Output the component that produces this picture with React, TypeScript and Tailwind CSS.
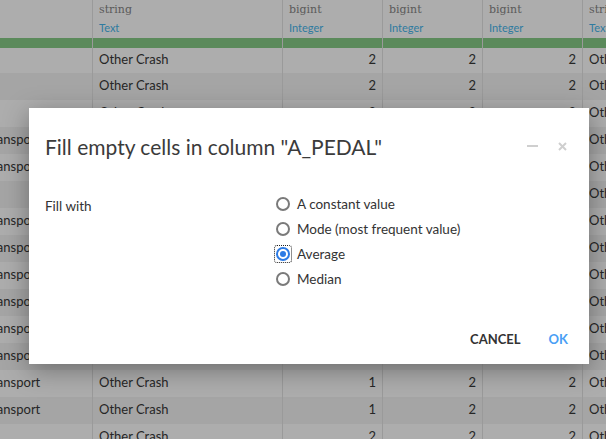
import React from 'react';

const font = { fontFamily: 'Lato, "Noto Sans", sans-serif' };

type Row = { c0: string; c1: string; n: [string, string, string] };

const rows: Row[] = [
  { c0: '', c1: 'Other Crash', n: ['2', '2', '2'] },
  { c0: '', c1: 'Other Crash', n: ['2', '2', '2'] },
  { c0: '', c1: 'Other Crash', n: ['2', '2', '2'] },
  { c0: 'Transport', c1: 'Other Crash', n: ['2', '2', '2'] },
  { c0: 'Transport', c1: 'Other Crash', n: ['2', '2', '2'] },
  { c0: '', c1: 'Other Crash', n: ['2', '2', '2'] },
  { c0: 'Transport', c1: 'Other Crash', n: ['2', '2', '2'] },
  { c0: 'Transport', c1: 'Other Crash', n: ['2', '2', '2'] },
  { c0: 'Transport', c1: 'Other Crash', n: ['2', '2', '2'] },
  { c0: 'Transport', c1: 'Other Crash', n: ['2', '2', '2'] },
  { c0: 'Transport', c1: 'Other Crash', n: ['2', '2', '2'] },
  { c0: 'Transport', c1: 'Other Crash', n: ['2', '2', '2'] },
  { c0: 'Transport', c1: 'Other Crash', n: ['1', '2', '2'] },
  { c0: 'Transport', c1: 'Other Crash', n: ['1', '2', '2'] },
  { c0: '', c1: 'Other Crash', n: ['2', '2', '2'] },
];

const cols = [
  { w: 'w-[113px]', type: '', meaning: '' },
  { w: 'w-[190px]', type: 'string', meaning: 'Text' },
  { w: 'w-[100px]', type: 'bigint', meaning: 'Integer' },
  { w: 'w-[100px]', type: 'bigint', meaning: 'Integer' },
  { w: 'w-[100px]', type: 'bigint', meaning: 'Integer' },
  { w: 'w-[60px]', type: 'string', meaning: 'Text' },
];

function Table() {
  return (
    <div className="w-[626px] h-[439px] ml-[-20px] overflow-hidden bg-[#adadad] text-[13px] text-[#262626]" style={font}>
      <div className="flex h-[38px]">
        {cols.map((c, i) => (
          <div
            key={i}
            className={`${c.w} shrink-0 border-r border-[#9a9a9a] pl-[6px] flex flex-col pt-[2px]`}
          >
            <span className="text-[11px] h-[16px] text-[#5a5a5a]" style={{ fontFamily: '"DejaVu Serif", serif' }}>
              {c.type}
            </span>
            <span className="text-[11px] mt-[2px] text-[#2f7ba0]">{c.meaning}</span>
          </div>
        ))}
      </div>
      <div className="flex h-[10px]">
        {cols.map((c, i) => (
          <div key={i} className={`${c.w} shrink-0 border-r border-[#9a9a9a] bg-[#5b8a5b]`} />
        ))}
      </div>
      {rows.map((r, i) => (
        <div
          key={i}
          className={`flex ${i === 0 ? 'h-[25px]' : 'h-[27px]'} ${i % 2 === 1 ? 'bg-[#a5a5a5]' : 'bg-[#adadad]'}`}
        >
          <div className="w-[113px] shrink-0 border-r border-[#9a9a9a] flex items-center overflow-hidden whitespace-nowrap pl-[6px] pb-[2px]">
            {r.c0}
          </div>
          <div className="w-[190px] shrink-0 border-r border-[#9a9a9a] flex items-center pl-[6px] pb-[2px]">{r.c1}</div>
          {r.n.map((v, j) => (
            <div key={j} className="w-[100px] shrink-0 border-r border-[#9a9a9a] flex items-center justify-end pr-[6px] pb-[2px]">
              {v}
            </div>
          ))}
          <div className="w-[60px] shrink-0 flex items-center pl-[6px] pb-[2px] whitespace-nowrap overflow-hidden">Other Crash</div>
        </div>
      ))}
    </div>
  );
}

const options = ['A constant value', 'Mode (most frequent value)', 'Average', 'Median'];

function Radio({ checked }: { checked: boolean }) {
  if (checked) {
    return (
      <span className="w-[16px] h-[16px] flex items-center justify-center outline outline-1 outline-dotted outline-[#222] rounded-[2px]">
        <span className="w-[14px] h-[14px] rounded-full border-2 border-[#2c7be5] flex items-center justify-center">
          <span className="w-[6px] h-[6px] rounded-full bg-[#2c7be5]" />
        </span>
      </span>
    );
  }
  return (
    <span className="w-[16px] h-[16px] flex items-center justify-center">
      <span className="w-[14px] h-[14px] rounded-full border-2 border-[#7a7a7a]" />
    </span>
  );
}

function Dialog() {
  return (
    <div
      className="absolute left-[29px] top-[108px] w-[560px] h-[256px] bg-white shadow-[0_6px_24px_rgba(0,0,0,0.35)] flex flex-col text-[#333]"
      style={font}
    >
      <div className="flex items-center h-[76px] pl-[16px] pr-[22px]">
        <h2 className="flex-1 text-[21px] leading-none text-[#3b3b3b]">Fill empty cells in column "A_PEDAL"</h2>
        <span className="w-[11px] h-[2px] bg-[#cfcfcf] mr-[20px]" />
        <svg width="9" height="9" viewBox="0 0 9 9">
          <path d="M1 1L8 8M8 1L1 8" stroke="#cfcfcf" strokeWidth="2" />
        </svg>
      </div>
      <div className="flex pl-[16px] pt-[11px]">
        <div className="w-[230px] text-[13.5px] leading-[18px] mt-[2px]">Fill with</div>
        <div className="flex flex-col gap-[7px]">
          {options.map((o, i) => (
            <label key={o} className="flex items-center gap-[6px] text-[13.5px] leading-[18px] text-[#333]">
              <Radio checked={i === 2} />
              {o}
            </label>
          ))}
        </div>
      </div>
      <div className="flex-1" />
      <div className="flex justify-end items-center gap-[28px] pr-[21px] pb-[15px]">
        <button className="text-[13px] font-bold text-[#333]">CANCEL</button>
        <button className="text-[13px] font-bold text-[#4a9ff5]">OK</button>
      </div>
    </div>
  );
}

export default function App() {
  return (
    <div className="relative w-[606px] h-[439px] overflow-hidden">
      <Table />
      <Dialog />
    </div>
  );
}
